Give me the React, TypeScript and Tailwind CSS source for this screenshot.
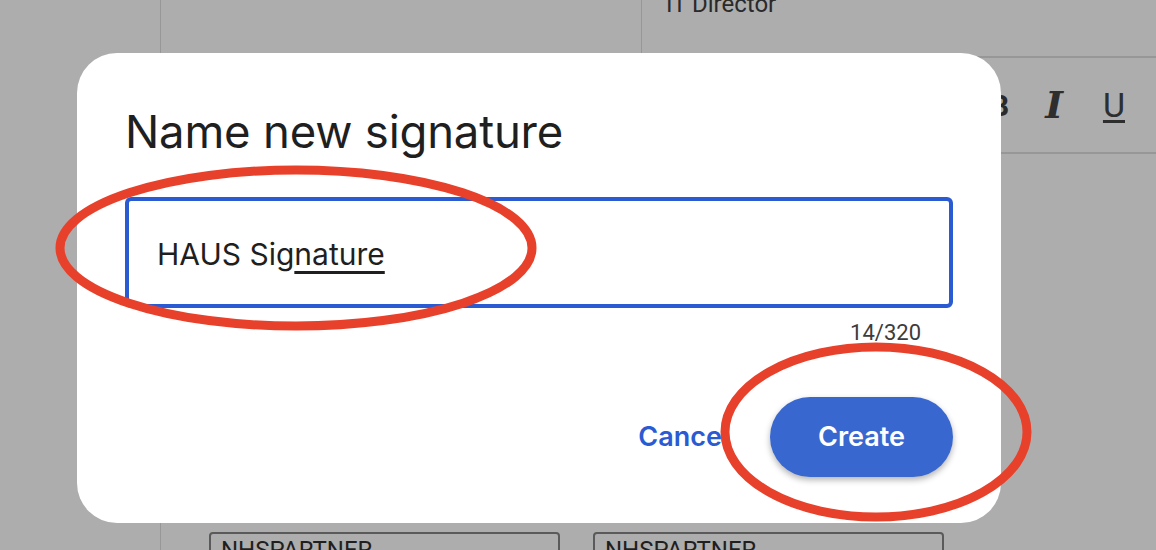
import { ChevronDown } from 'lucide-react'

const sans = "font-['Inter',sans-serif]"
const roboto = "font-['Roboto',sans-serif]"

function PartnerSelect() {
  return (
    <div className="flex h-[40px] w-[351px] items-start justify-between rounded-[4px] border-2 border-[#5a5a5a] px-[10px] pt-[2px]">
      <span className={`${roboto} text-[24px] leading-[28px] text-[#1f1f1f]`}>NHSPARTNER</span>
      <ChevronDown size={20} strokeWidth={1.5} className="mt-[12px] text-[#2a2a2a]" />
    </div>
  )
}

function Annotation({ cx, cy, rx, ry }: { cx: number; cy: number; rx: number; ry: number }) {
  return (
    <svg className="pointer-events-none absolute left-0 top-0" width={1156} height={550}>
      <ellipse cx={cx} cy={cy} rx={rx} ry={ry} fill="none" stroke="#e8412b" strokeWidth={9} />
    </svg>
  )
}

export default function App() {
  return (
    <div className="relative h-[550px] w-[1156px] overflow-hidden bg-[#adadad]">
      {/* dimmed page behind the dialog */}
      <div className="flex h-full">
        <div className="w-[161px] shrink-0 border-r border-[#979797]" />
        <div className="flex flex-1 flex-col">
          <div className="flex h-[58px]">
            <div className="w-[481px] border-r border-[#979797]" />
            <div className="flex-1 border-b-2 border-[#979797] pl-[24px]">
              <p className={`${roboto} -mt-[10px] text-[24px] leading-[28px] text-[#2a2a2a]`}>IT Director</p>
            </div>
          </div>
          <div className="flex h-[96px] items-center justify-end border-b-2 border-[#979797] pr-[31px]">
            <span className={`${roboto} mr-[36px] text-[30px] font-bold text-[#2a2a2a]`}>B</span>
            <span className="mr-[40px] font-['DejaVu_Serif',serif] text-[38px] font-bold italic leading-none text-[#2e2e2e]">I</span>
            <span className={`${roboto} text-[34px] leading-none text-[#2e2e2e] underline decoration-[3px] underline-offset-[3px]`}>U</span>
          </div>
          <div className="flex flex-1 items-end pl-[48px]">
            <div className="-mb-[22px] flex gap-[33px]">
              <PartnerSelect />
              <PartnerSelect />
            </div>
          </div>
        </div>
      </div>

      {/* dialog */}
      <div className="absolute left-[77px] top-[53px] flex h-[470px] w-[924px] flex-col rounded-[40px] bg-white pl-[48px] pr-[48px]">
        <h1 className={`${sans} mt-[53px] text-[45.5px] leading-[52px] tracking-[-0.2px] text-[#1f1f1f]`}>Name new signature</h1>
        <div className="mt-[39px] flex h-[111px] items-center rounded-[6px] border-4 border-[#2b5bd2]">
          <span className={`${sans} ml-[28px] mt-[2px] text-[30px] leading-[34px] text-[#1f1f1f]`}>
            HAUS Sig
            <span className="underline decoration-[3px] underline-offset-[6px]">nature</span>
          </span>
        </div>
        <div className="flex justify-end pr-[32px] pt-[12px]">
          <span className={`${roboto} text-[22px] leading-[26px] text-[#3c3c3c]`}>14/320</span>
        </div>
        <div className="mt-[51px] flex items-center justify-end gap-[41px]">
          <span className={`${sans} text-[27px] font-semibold text-[#2a5bd2]`}>Cancel</span>
          <button className={`${sans} h-[80px] w-[183px] rounded-full bg-[#3867d0] text-[27px] font-semibold text-white shadow-[0_3px_6px_rgba(0,0,0,0.3)]`}>
            Create
          </button>
        </div>
      </div>

      {/* red annotation rings */}
      <Annotation cx={296} cy={248} rx={236} ry={78} />
      <Annotation cx={876} cy={432} rx={151} ry={85} />
    </div>
  )
}
